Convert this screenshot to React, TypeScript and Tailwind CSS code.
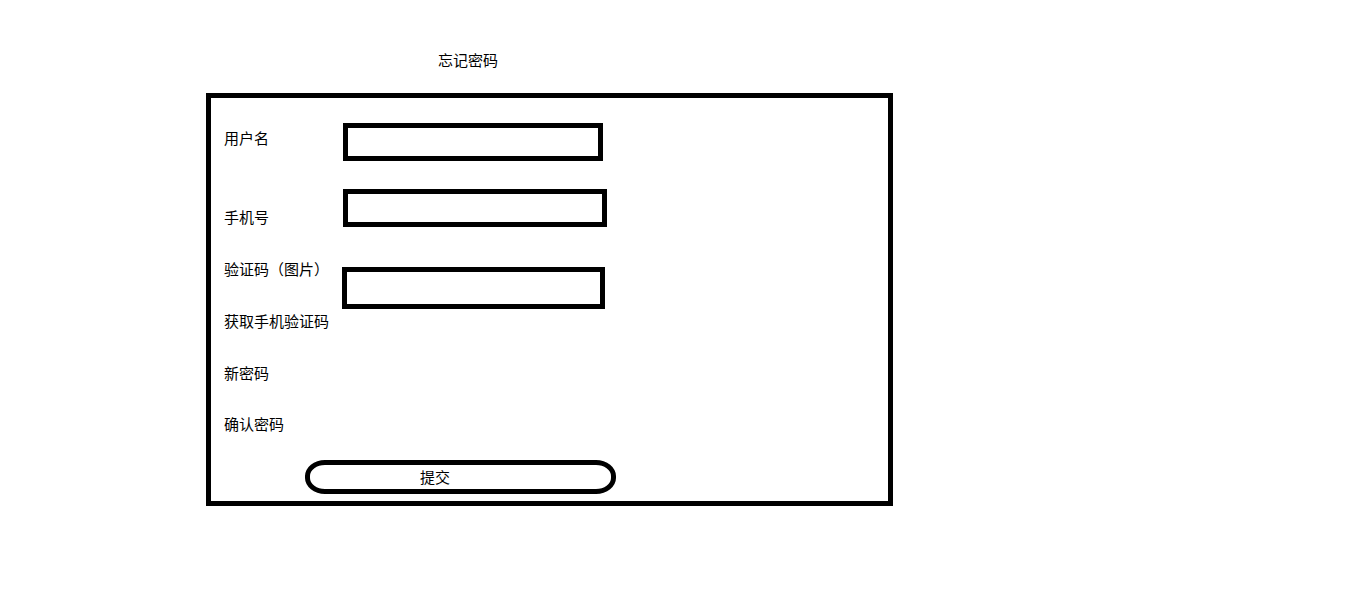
export default function App() {
  return (
    <div
      className="h-[601px] w-[1360px] bg-white text-[15px] leading-[20px] text-black"
      style={{ fontFamily: '"Noto Sans CJK SC", "Microsoft YaHei", sans-serif' }}
    >
      <div className="pl-[438px] pt-[50px]">忘记密码</div>

      <div className="ml-[206px] mt-[23px] h-[413px] w-[687px] border-[5px] border-black pl-[13px]">
        <div className="mt-[25px] flex items-start">
          <span className="mt-[5px] w-[119px]">用户名</span>
          <div className="h-[38px] w-[260px] border-[5px] border-black"></div>
        </div>

        <div className="mt-[28px] flex items-start">
          <span className="mt-[18px] w-[119px]">手机号</span>
          <div className="h-[38px] w-[264px] border-[5px] border-black"></div>
        </div>

        <div className="mt-[32px] flex items-start">
          <span className="w-[118px]">验证码（图片）</span>
          <div className="mt-[8px] h-[42px] w-[263px] border-[5px] border-black"></div>
        </div>

        <div className="mt-[2px]">获取手机验证码</div>
        <div className="mt-[32px]">新密码</div>
        <div className="mt-[31px]">确认密码</div>

        <button
          type="button"
          className="ml-[81px] mt-[26px] flex h-[34px] w-[311px] items-center rounded-[20px/16px] border-[5px] border-black pl-[110px]"
        >
          提交
        </button>
      </div>
    </div>
  )
}
